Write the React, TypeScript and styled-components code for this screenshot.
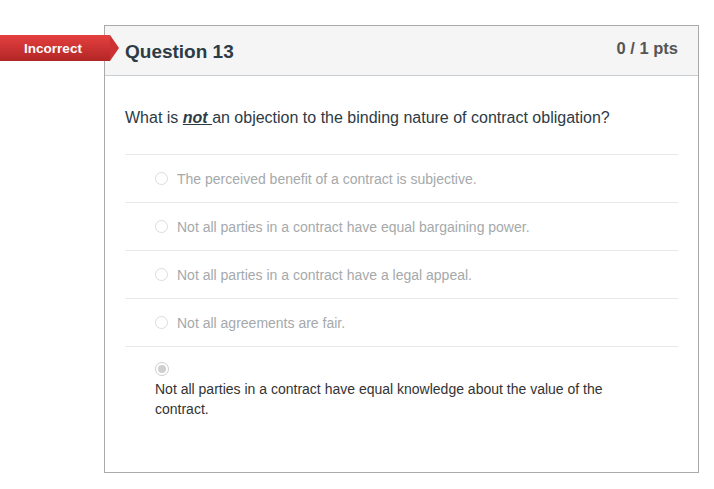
import React from "react";
import styled, { createGlobalStyle } from "styled-components";

const Global = createGlobalStyle`
  html, body { margin: 0; padding: 0; background: #fff; }
  body { font-family: "Liberation Sans", Arial, sans-serif; }
`;

const Page = styled.div`
  position: relative;
  padding: 25px 0 0 104px;
  width: 714px;
  height: 489px;
  box-sizing: border-box;
`;

const Card = styled.div`
  width: 595px;
  height: 448px;
  box-sizing: border-box;
  border: 1px solid #aaaaaa;
  display: flex;
  flex-direction: column;
`;

const Header = styled.div`
  height: 50px;
  box-sizing: border-box;
  background: #f5f5f5;
  border-bottom: 1px solid #c7cdd1;
  display: flex;
  justify-content: space-between;
  padding: 0 20px;
`;

const Title = styled.h2`
  margin: 0;
  font-size: 19px;
  font-weight: bold;
  color: #2d3b45;
  line-height: 22px;
  padding-top: 15px;
`;

const Points = styled.div`
  font-size: 16.5px;
  font-weight: bold;
  color: #555;
  line-height: 18px;
  padding-top: 13px;
`;

const Badge = styled.div`
  position: absolute;
  left: 0;
  top: 35px;
  height: 26px;
  width: 110px;
  background: linear-gradient(#e4403f, #b32626);
  color: #fff;
  font-weight: bold;
  font-size: 13.5px;
  display: flex;
  align-items: center;
  justify-content: center;
  box-sizing: border-box;
  padding-right: 4px;
  &::after {
    content: "";
    position: absolute;
    right: -9px;
    top: 0;
    width: 0;
    height: 0;
    border-top: 13px solid transparent;
    border-bottom: 13px solid transparent;
    border-left: 9px solid #cc3232;
  }
`;

const Body = styled.div`
  padding: 0 20px;
`;

const QuestionText = styled.p`
  margin: 0;
  padding-top: 32px;
  height: 78px;
  box-sizing: border-box;
  font-size: 16px;
  line-height: 20px;
  color: #2d3b45;
`;

const Not = styled.span`
  font-weight: bold;
  font-style: italic;
  text-decoration: underline;
`;

const Answer = styled.div`
  border-top: 1px solid #e8e8e8;
  height: 48px;
  box-sizing: border-box;
  display: flex;
  align-items: center;
  padding-left: 30px;
  gap: 9px;
  font-size: 14px;
  color: #a5a9ab;
`;

const Radio = styled.span<{ $checked?: boolean }>`
  width: 11px;
  height: 11px;
  border-radius: 50%;
  border: 1px solid #dcdcdc;
  background: #fff;
  display: block;
  box-sizing: content-box;
  position: relative;
  flex: none;
  ${(p) =>
    p.$checked &&
    `
    width: 12px; height: 12px;
    border-color: #cfcfcf;
    margin-bottom: 3px;
    &::after {
      content: "";
      position: absolute;
      left: 2px; top: 2px;
      width: 8px; height: 8px;
      border-radius: 50%;
      background: #cfcfcf;
    }
  `}
`;

const SelectedAnswer = styled.div`
  border-top: 1px solid #e8e8e8;
  padding: 15px 0 0 30px;
  font-size: 14px;
  line-height: 20px;
  color: #333;
`;

const SelectedText = styled.div`
  width: 470px;
`;

const answers = [
  "The perceived benefit of a contract is subjective.",
  "Not all parties in a contract have equal bargaining power.",
  "Not all parties in a contract have a legal appeal.",
  "Not all agreements are fair.",
];

export default function App() {
  return (
    <>
      <Global />
      <Page>
        <Badge>Incorrect</Badge>
        <Card>
          <Header>
            <Title>Question 13</Title>
            <Points>0 / 1 pts</Points>
          </Header>
          <Body>
            <QuestionText>
              What is <Not>not </Not>an objection to the binding nature of contract obligation?
            </QuestionText>
            {answers.map((a) => (
              <Answer key={a}>
                <Radio />
                {a}
              </Answer>
            ))}
            <SelectedAnswer>
              <Radio $checked />
              <SelectedText>
                Not all parties in a contract have equal knowledge about the value of the contract.
              </SelectedText>
            </SelectedAnswer>
          </Body>
        </Card>
      </Page>
    </>
  );
}
